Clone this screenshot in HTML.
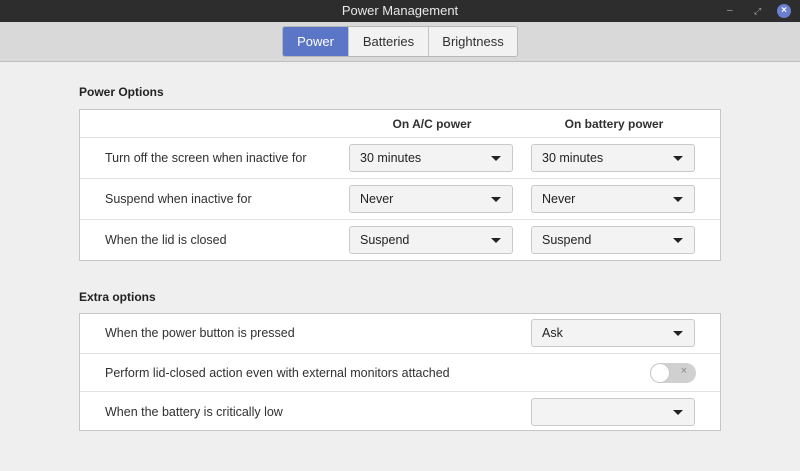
<!DOCTYPE html>
<html><head><style>
*{box-sizing:border-box;margin:0;padding:0}
body{width:800px;height:471px;overflow:hidden;background:#efefef;font-family:"Liberation Sans","DejaVu Sans",sans-serif;font-size:12.5px;color:#303030;position:relative}
.tb{position:absolute;left:0;top:0;width:800px;height:22px;background:#2d2d2d;color:#e8e8e8;text-align:center;line-height:22px;font-size:13px}
.tool{position:absolute;top:22px;left:0;width:800px;height:40px;background:#d9d9d9;border-bottom:1px solid #bdbdbd}
.tabs{position:absolute;left:282px;top:4px;height:31px;display:flex;border:1px solid #b8b8b8;border-radius:3px;overflow:hidden}
.tabs div{background:#f2f2f2;line-height:29px;text-align:center;border-left:1px solid #c4c4c4;font-size:13px}
.tabs .a{background:#5b76c6;color:#fff;border-left:none}
.h{position:absolute;left:79px;font-weight:bold;font-size:12px;color:#222}
.box{position:absolute;left:79px;width:642px;background:#fff;border:1px solid #c6c6c6}
.row{position:absolute;left:0;width:640px;border-top:1px solid #e2e2e2}
.lbl{position:absolute;left:25px}
.cb{position:absolute;width:164px;height:28px;background:#f3f3f3;border:1px solid #c9c9c9;border-radius:3px;padding-left:10px;line-height:26px;color:#222}
.cb:after{content:"";position:absolute;right:11px;top:11px;border-left:5px solid transparent;border-right:5px solid transparent;border-top:5px solid #222}
</style></head><body>
<div class="tb">Power Management
<span style="position:absolute;left:727px;top:0;font-size:10px;color:#aaa">–</span>
<span style="position:absolute;left:754px;top:0;font-size:9px;color:#aaa">⤢</span>
<span style="position:absolute;left:777px;top:4px;width:14px;height:14px;border-radius:7px;background:#6a7fd0;color:#fff;font-size:10px;line-height:14px;font-weight:bold">×</span>
</div>
<div class="tool"><div class="tabs"><div class="a" style="width:65px">Power</div><div style="width:80px">Batteries</div><div style="width:89px">Brightness</div></div></div>
<div class="h" style="top:85px">Power Options</div>
<div class="box" style="top:109px;height:152px">
<div style="position:absolute;left:270px;width:164px;top:7px;text-align:center;font-weight:bold;font-size:12px">On A/C power</div>
<div style="position:absolute;left:452px;width:164px;top:7px;text-align:center;font-weight:bold;font-size:12px">On battery power</div>
<div class="row" style="top:27px;height:41px"><span class="lbl" style="top:13px">Turn off the screen when inactive for</span><div class="cb" style="left:269px;top:6px">30 minutes</div><div class="cb" style="left:451px;top:6px">30 minutes</div></div>
<div class="row" style="top:68px;height:41px"><span class="lbl" style="top:13px">Suspend when inactive for</span><div class="cb" style="left:269px;top:6px">Never</div><div class="cb" style="left:451px;top:6px">Never</div></div>
<div class="row" style="top:109px;height:41px"><span class="lbl" style="top:13px">When the lid is closed</span><div class="cb" style="left:269px;top:6px">Suspend</div><div class="cb" style="left:451px;top:6px">Suspend</div></div>
</div>
<div class="h" style="top:290px">Extra options</div>
<div class="box" style="top:313px;height:118px">
<div class="row" style="top:-1px;height:41px;border-top:none"><span class="lbl" style="top:13px">When the power button is pressed</span><div class="cb" style="left:451px;top:6px">Ask</div></div>
<div class="row" style="top:39px;height:38px"><span class="lbl" style="top:12px">Perform lid-closed action even with external monitors attached</span>
<div style="position:absolute;left:570px;top:9px;width:46px;height:20px;border-radius:10px;background:#d0d0d0"><div style="position:absolute;left:0;top:0;width:20px;height:20px;border-radius:10px;background:#fff;border:1px solid #c8c8c8"></div><span style="position:absolute;right:9px;top:2px;font-size:11px;color:#888">×</span></div></div>
<div class="row" style="top:77px;height:40px"><span class="lbl" style="top:13px">When the battery is critically low</span><div class="cb" style="left:451px;top:6px"></div></div>
</div>
</body></html>
